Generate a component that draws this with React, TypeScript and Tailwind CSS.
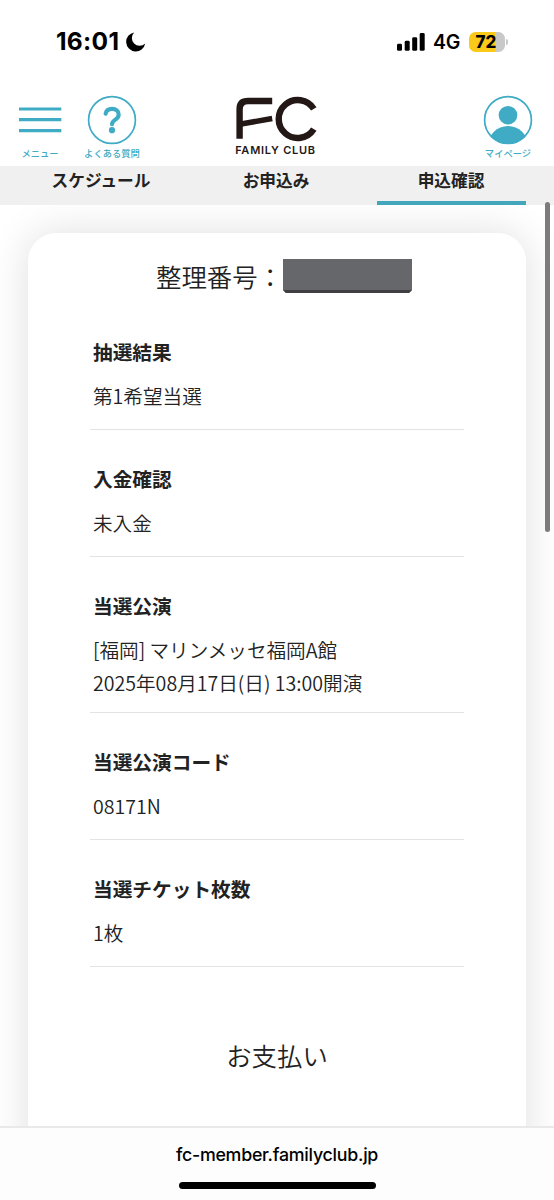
import React from "react";

const JP = "font-['Noto_Sans_CJK_JP',sans-serif]";

type Entry = { label: string; lines: string[] };

const entries: Entry[] = [
  { label: "抽選結果", lines: ["第1希望当選"] },
  { label: "入金確認", lines: ["未入金"] },
  { label: "当選公演", lines: ["[福岡] マリンメッセ福岡A館", "2025年08月17日(日) 13:00開演"] },
  { label: "当選公演コード", lines: ["08171N"] },
  { label: "当選チケット枚数", lines: ["1枚"] },
];

function StatusBar() {
  return (
    <div className="flex h-[83px] items-start justify-between pl-[56px] pr-[46px] pt-[29px] font-['Inter',sans-serif] text-black">
      <div className="flex h-[25px] items-center gap-[6px]">
        <span className="w-[64px] whitespace-nowrap text-[24.5px] font-bold leading-[25px] tracking-[0.3px]">16:01</span>
        <svg width="20" height="20" viewBox="0 0 20 20">
          <path d="M8.2 0.4A9.6 9.6 0 1 0 19.2 11.6A7.4 7.4 0 0 1 8.2 0.4Z" fill="#000" />
        </svg>
      </div>
      <div className="flex h-[25px] items-center">
        <svg width="28" height="18" viewBox="0 0 28 18">
          <rect x="0" y="10.8" width="5" height="7" rx="1.4" />
          <rect x="7.7" y="7.8" width="5" height="10" rx="1.4" />
          <rect x="15.2" y="4.2" width="5" height="13.6" rx="1.4" />
          <rect x="22.7" y="0" width="5" height="17.8" rx="1.4" />
        </svg>
        <span className="ml-[8px] w-[28px] whitespace-nowrap pt-px text-[19.5px] font-semibold leading-[25px] tracking-[-0.3px]">4G</span>
        <span className="ml-[8px] flex h-[20px] w-[36px] items-center justify-center rounded-[6.5px] bg-[linear-gradient(to_right,#fbc91a_72%,#c9c9c9_72%)] text-[17px] font-extrabold leading-[20px]">
          <span className="-translate-x-px">72</span>
        </span>
        <span className="ml-[1px] h-[6px] w-[2px] rounded-r-full bg-[#c9c9c9]" />
      </div>
    </div>
  );
}

function Logo() {
  return (
    <div className="flex w-[84px] flex-col items-center pt-[13px] text-[#231815]">
      <svg width="84" height="46" viewBox="234.4 96 84 46" fill="none" stroke="currentColor">
        <path d="M240 138.8V109Q240 101 248.5 101H272.6" strokeWidth="6.4" />
        <path d="M240 124.3L272.6 118.6" strokeWidth="5.6" />
        <path d="M314.2 108.9A19 19 0 1 0 314.2 129.1" strokeWidth="6.4" />
      </svg>
      <span className="mt-[2px] whitespace-nowrap font-['Inter',sans-serif] text-[11px] font-semibold leading-[12px] tracking-[0.75px]">
        FAMILY CLUB
      </span>
    </div>
  );
}

function Header() {
  return (
    <header className={`flex h-[83px] justify-between pl-[18px] pr-[21px] text-[#3fabc5] ${JP}`}>
      <div className="flex w-[124px] items-start gap-[20px] pt-[12px]">
        <div className="flex w-[44px] flex-col items-center">
          <svg width="44" height="50" viewBox="0 0 44 50" fill="currentColor">
            <path d="M1 12.4h42.3v3.2H1zM1 23.1h42.3v3.2H1zM1 34h42.3v3.2H1z" />
          </svg>
          <span className="whitespace-nowrap text-[9.3px] font-medium leading-[16px]">メニュー</span>
        </div>
        <div className="flex w-[60px] flex-col items-center">
          <svg width="50" height="50" viewBox="0 0 50 50" fill="none" stroke="currentColor">
            <circle cx="25" cy="25" r="23.4" strokeWidth="1.7" />
            <path d="M18.6 18.7C19.4 15.2 22 13.9 25 13.9C28.8 13.9 31.7 16.1 31.7 19.6C31.7 22.5 30 23.8 27.8 25.1C25.8 26.4 25 27.3 25 29.2" strokeWidth="4.1" strokeLinecap="round" />
            <circle cx="25" cy="35.2" r="3.1" fill="currentColor" stroke="none" />
          </svg>
          <span className="whitespace-nowrap text-[9.3px] font-medium leading-[16px]">よくある質問</span>
        </div>
      </div>
      <Logo />
      <div className="flex w-[124px] flex-col items-end pt-[12px]">
        <div className="flex w-[50px] flex-col items-center">
          <svg width="50" height="50" viewBox="0 0 50 50">
            <defs>
              <clipPath id="avatar">
                <circle cx="25" cy="25" r="24" />
              </clipPath>
            </defs>
            <g clipPath="url(#avatar)" fill="currentColor">
              <circle cx="25" cy="20.2" r="9.3" />
              <circle cx="25" cy="51" r="20" />
            </g>
            <circle cx="25" cy="25" r="23.4" fill="none" stroke="currentColor" strokeWidth="1.7" />
          </svg>
          <span className="whitespace-nowrap text-[9.3px] font-medium leading-[16px]">マイページ</span>
        </div>
      </div>
    </header>
  );
}

function Tabs() {
  return (
    <nav className={`grid h-[39px] grid-cols-[149px_149px_149px] justify-center gap-x-[26px] bg-[#f0f0f0] pr-[2px] text-center text-[16.7px] font-bold leading-[29px] text-[#222] ${JP}`}>
      <span>スケジュール</span>
      <span>お申込み</span>
      <span className="border-b-4 border-[#43a7bc]">申込確認</span>
    </nav>
  );
}

function Row({ label, lines }: Entry) {
  return (
    <div className={`border-b-[1.5px] border-[#e3e3e3] pl-[3px] pt-[33px] text-[#222] ${lines.length > 1 ? "pb-[13.3px]" : "pb-[16.8px]"}`}>
      <dt className="text-[19.7px] font-bold leading-[32px]">{label}</dt>
      <dd className="mt-[11px] text-[19.6px] font-[350] leading-[33px]">
        {lines.map((line) => (
          <p key={line} className="whitespace-nowrap">{line}</p>
        ))}
      </dd>
    </div>
  );
}

export default function App() {
  return (
    <div className="relative flex h-[1200px] w-[554px] flex-col overflow-hidden bg-white">
      <StatusBar />
      <Header />
      <Tabs />
      <main className={`min-h-0 flex-1 overflow-hidden bg-white px-[28px] pt-[28px] ${JP}`}>
        <section className="h-[1000px] rounded-[28px] bg-white pt-[24px] shadow-[0_0_40px_rgba(0,0,0,0.13)]">
          <h1 className="flex h-[39px] items-center pl-[128px] text-[25.4px] font-[350] leading-[39px] text-[#222]">
            <span className="w-[127px] whitespace-nowrap">整理番号：</span>
            <svg className="-mt-[2px]" width="129" height="34" viewBox="0 0 130 34" preserveAspectRatio="none">
              <path d="M0 0H130V31L127 34H3L0 31Z" fill="#66676a" />
              <path d="M0 31H130L127 34H3L0 31Z" fill="#403e42" />
            </svg>
          </h1>
          <dl className="ml-[62px] mt-[7.4px] w-[374px]">
            {entries.map((entry) => (
              <Row key={entry.label} {...entry} />
            ))}
          </dl>
          <h2 className="mt-[69px] text-center text-[25.4px] font-[350] leading-[39px] text-[#222]">お支払い</h2>
        </section>
      </main>
      <footer className="flex h-[74px] shrink-0 flex-col items-center border-t-2 border-[#e9e9e9] bg-[#fdfdfd] pt-[14px]">
        <span className="font-['Inter',sans-serif] text-[17.8px] font-medium leading-[26px] tracking-[-0.25px] text-black">fc-member.familyclub.jp</span>
        <div className="mt-[14px] h-[7px] w-[197px] rounded-full bg-black" />
      </footer>
      <div className="absolute left-[545px] top-[202px] h-[330px] w-[5px] rounded-full bg-[#7c7c7c]" />
    </div>
  );
}
